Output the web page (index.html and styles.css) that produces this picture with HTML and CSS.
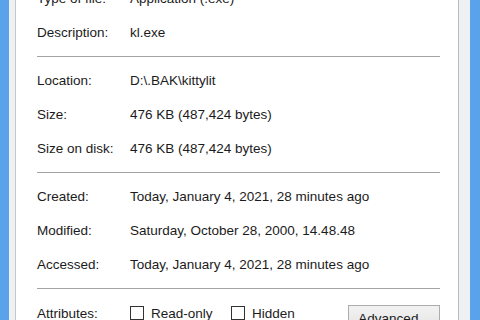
FILE: index.html
```html
<!DOCTYPE html>
<html lang="en">

<head>
    <meta charset="UTF-8">
    <title>kl.exe Properties</title>
    <link rel="stylesheet" href="styles.css">
</head>

<body>
    <div class="window">
        <div class="frame frame_left"></div>
        <div class="edge edge_left"></div>

        <div class="page">
            <div class="props">
                <!-- general file info -->
                <div class="group">
                    <div class="row"><span class="label">Type of file:</span><span class="value">Application (.exe)</span></div>
                    <div class="row"><span class="label">Description:</span><span class="value">kl.exe</span></div>
                </div>
                <hr class="sep">

                <div class="group">
                    <div class="row"><span class="label">Location:</span><span class="value">D:\.BAK\kittylit</span></div>
                    <div class="row"><span class="label">Size:</span><span class="value">476 KB (487,424 bytes)</span></div>
                    <div class="row"><span class="label">Size on disk:</span><span class="value">476 KB (487,424 bytes)</span></div>
                </div>
                <hr class="sep">

                <div class="group">
                    <div class="row"><span class="label">Created:</span><span class="value">Today, January 4, 2021, 28 minutes ago</span></div>
                    <div class="row"><span class="label">Modified:</span><span class="value">Saturday, October 28, 2000, 14.48.48</span></div>
                    <div class="row"><span class="label">Accessed:</span><span class="value">Today, January 4, 2021, 28 minutes ago</span></div>
                </div>
                <hr class="sep">

                <div class="row attrs">
                    <span class="label">Attributes:</span>
                    <div class="checks">
                        <label class="check check_ro"><span class="box"></span>Read-only</label>
                        <label class="check"><span class="box"></span>Hidden</label>
                        <button class="adv_btn" type="button">Advanced...</button>
                    </div>
                </div>
            </div>
        </div>

        <div class="edge edge_right"></div>
        <div class="frame frame_right"></div>
    </div>
</body>

</html>
```

FILE: styles.css
```css
html,
body {
    margin: 0;
    height: 100%;
    overflow: hidden;
}

body {
    font-family: "Liberation Sans", Arial, sans-serif;
    font-size: 13.5px;
    color: #1b1b1b;
}

.window {
    display: flex;
    height: 320px;
}

/* blue window frame on both sides */
.frame {
    background: #5aa2ea;
}

.frame_left {
    width: 9px;
}

.frame_right {
    width: 10px;
}

.edge {
    background: #eff0f2;
}

.edge_left {
    width: 6px;
    border-right: 1px solid #c4c6c9;
}

.edge_right {
    width: 11px;
    border-left: 1px solid #b9bbbe;
}

.page {
    flex: 1;
    background: #fff;
    padding: 0 18px 0 21px;
}

.props {
    margin-top: -19px;
}

.row {
    display: grid;
    grid-template-columns: 93px 1fr;
    align-items: center;
    height: 34px;
    white-space: nowrap;
}

.sep {
    border: 0;
    border-top: 1px solid #a3a3a3;
    margin: 7px 0 6px 0;
}

.checks {
    display: flex;
    align-items: center;
}

.check {
    display: flex;
    align-items: center;
    gap: 7px;
}

.check_ro {
    width: 101px;
}

.box {
    width: 12px;
    height: 12px;
    border: 1px solid #333;
    background: #fff;
}

.adv_btn {
    margin-left: auto;
    margin-top: 10px;
    width: 92px;
    height: 26px;
    font: inherit;
    color: #1b1b1b;
    border: 1px solid #acacac;
    background: linear-gradient(#f2f2f2, #e4e4e4);
    padding: 0;
    text-align: center;
}
```
